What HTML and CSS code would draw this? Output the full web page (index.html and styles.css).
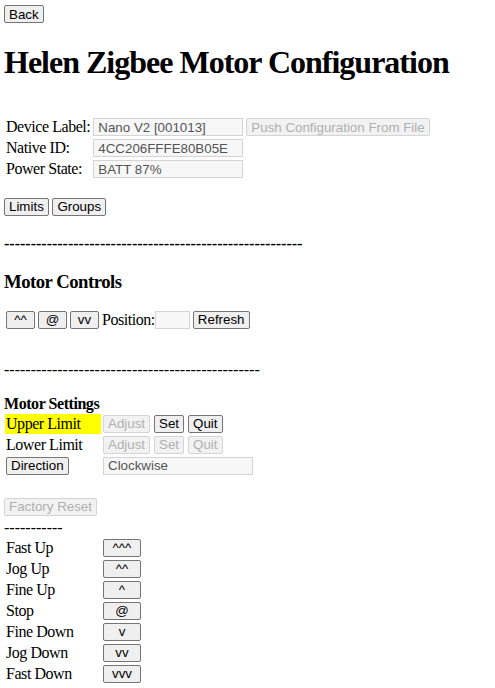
FILE: index.html
```html
<!DOCTYPE html>
<html lang="en">

<head>
    <meta charset="UTF-8">
    <meta name="viewport" content="width=device-width, initial-scale=1.0">
    <title>Helen Zigbee Motor Configuration</title>
    <link rel="stylesheet" href="styles.css">
</head>

<body>
    <button class="btn">Back</button>
    <h1>Helen Zigbee Motor Configuration</h1>

    <table class="info">
        <tr>
            <td>Device Label:</td>
            <td><input class="field" type="text" value="Nano V2 [001013]" disabled></td>
            <td><button class="btn" disabled>Push Configuration From File</button></td>
        </tr>
        <tr>
            <td>Native ID:</td>
            <td><input class="field" type="text" value="4CC206FFFE80B05E" disabled></td>
        </tr>
        <tr>
            <td>Power State:</td>
            <td><input class="field" type="text" value="BATT 87%" disabled></td>
        </tr>
    </table>

    <p class="tabs"><button class="btn">Limits</button> <button class="btn">Groups</button></p>

    <p class="rule bold">--------------------------------------------------------</p>

    <h3>Motor Controls</h3>
    <div class="controls">
        <button class="btn arrow">^^</button>
        <button class="btn arrow">@</button>
        <button class="btn arrow">vv</button>
        <span class="pos">Position:<input class="field small" type="text" disabled></span>
        <button class="btn">Refresh</button>
    </div>

    <p class="rule spaced">------------------------------------------------</p>

    <div class="settings-title">Motor Settings</div>
    <table class="settings">
        <tr>
            <td class="name active">Upper Limit</td>
            <td class="row-btns">
                <button class="btn" disabled>Adjust</button>
                <button class="btn">Set</button>
                <button class="btn">Quit</button>
            </td>
        </tr>
        <tr>
            <td class="name">Lower Limit</td>
            <td class="row-btns">
                <button class="btn" disabled>Adjust</button>
                <button class="btn" disabled>Set</button>
                <button class="btn" disabled>Quit</button>
            </td>
        </tr>
        <tr>
            <td class="name"><button class="btn">Direction</button></td>
            <td><input class="field" type="text" value="Clockwise" disabled></td>
        </tr>
    </table>

    <p class="reset"><button class="btn" disabled>Factory Reset</button></p>
    <div class="rule">-----------</div>

    <table class="jog">
        <tr><td class="name">Fast Up</td><td><button class="btn step">^^^</button></td></tr>
        <tr><td class="name">Jog Up</td><td><button class="btn step">^^</button></td></tr>
        <tr><td class="name">Fine Up</td><td><button class="btn step">^</button></td></tr>
        <tr><td class="name">Stop</td><td><button class="btn step">@</button></td></tr>
        <tr><td class="name">Fine Down</td><td><button class="btn step">v</button></td></tr>
        <tr><td class="name">Jog Down</td><td><button class="btn step">vv</button></td></tr>
        <tr><td class="name">Fast Down</td><td><button class="btn step">vvv</button></td></tr>
    </table>
</body>

</html>
```

FILE: styles.css
```css
body {
    margin: 4px;
    font-family: "Liberation Serif", serif;
    font-size: 16px;
    letter-spacing: -0.45px;
    color: #000;
    background: #fff;
}

.btn {
    font-family: "Liberation Sans", Arial, sans-serif;
    font-size: 13.33px;
    letter-spacing: 0;
    height: 18px;
    padding: 0 4px;
    margin: 0;
    background: #efefef;
    color: #000;
    border: 1px solid #767676;
    border-radius: 2px;
    vertical-align: middle;
}

.btn:disabled {
    color: #b0b0b0;
    border-color: #d4d4d4;
    background: #f2f2f2;
}

.field {
    font-family: "Liberation Sans", Arial, sans-serif;
    font-size: 13.33px;
    letter-spacing: 0;
    width: 150px;
    height: 18px;
    box-sizing: border-box;
    padding: 0 4px;
    margin: 0;
    border: 1px solid #d4d4d4;
    background: #f7f7f7;
    color: #545454;
    vertical-align: middle;
}

h1 {
    font-size: 32px;
    letter-spacing: -1px;
    margin: 21px 0 35px;
}

table {
    border-collapse: separate;
    border-spacing: 1px;
}

td {
    padding: 1px;
    line-height: 18px;
}

td .btn,
td .field {
    vertical-align: top;
}

.tabs {
    margin: 16px 0 19px;
}

.rule {
    letter-spacing: 0;
    margin: 16px 0;
}

.rule.spaced {
    margin-top: 32px;
}

.bold {
    font-weight: bold;
}

h3 {
    font-size: 18.72px;
    letter-spacing: -0.5px;
    margin: 18px 0;
}

.controls {
    display: flex;
    align-items: center;
    gap: 3px;
    padding-left: 2px;
}

.arrow {
    width: 29px;
}

.pos {
    display: flex;
    align-items: center;
}

.small {
    width: 35px;
}

.settings-title {
    font-weight: bold;
}

.row-btns {
    display: flex;
    gap: 4px;
}

.name {
    width: 94px;
}

.active {
    background: #ffff00;
}

.reset {
    margin: 20px 0 3px;
}

div.rule {
    margin: 0;
}

.step {
    width: 38px;
}
```
